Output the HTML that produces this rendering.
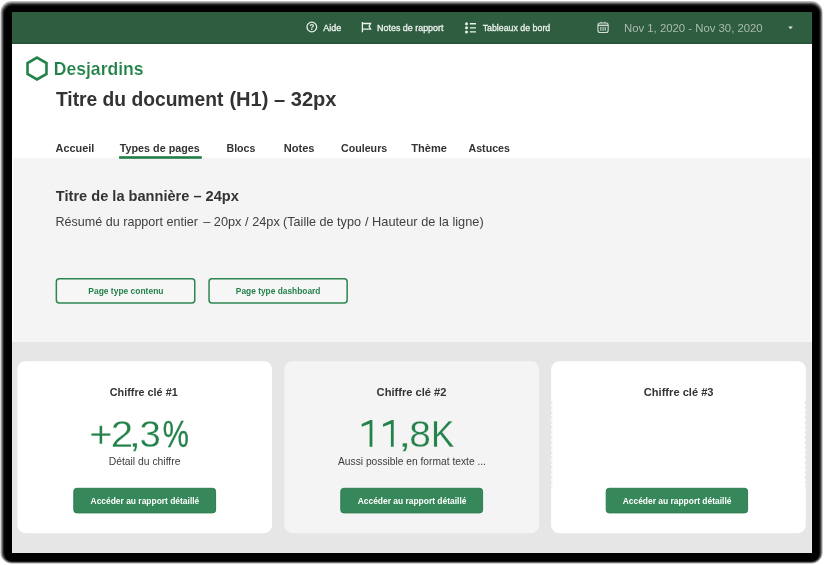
<!DOCTYPE html>
<html><head><meta charset="utf-8">
<style>
*{margin:0;padding:0;box-sizing:border-box}
html,body{width:824px;height:565px;overflow:hidden;background:#fff;font-family:"Liberation Sans",sans-serif}
svg{position:absolute;left:0;top:0}
.t{position:absolute;white-space:nowrap;transform-origin:0 50%}
</style></head><body>
<svg width="824" height="565" viewBox="0 0 824 565">
 <!-- black frame (flattened shadow) -->
 <rect x="0.6" y="1.2" width="821.9" height="562.3" rx="11" fill="#a6a6a6"/>
 <rect x="1.8" y="2.7" width="819.7" height="560.1" rx="10" fill="#595959"/>
 <rect x="3" y="4.1" width="817.5" height="557.9" rx="9" fill="#1f1f1f"/>
 <rect x="4.3" y="5.6" width="815.1" height="555.7" rx="8" fill="#000"/>
 <!-- app surface -->
 <rect x="12" y="12" width="800" height="541" fill="#fff"/>
 <rect x="12" y="12" width="800" height="31.9" fill="#2f5d40"/>
 <rect x="12" y="42.6" width="800" height="1.3" fill="#27533a"/>
 <rect x="13.1" y="158.1" width="797.8" height="184" fill="#f4f4f4"/>
 <rect x="12" y="342" width="800" height="211" fill="#e6e6e6"/>
 <!-- logo hexagon -->
 <path d="M37 57.55 L46.48 63.03 L46.48 73.98 L37 79.45 L27.52 73.98 L27.52 63.03 Z" fill="none" stroke="#23824a" stroke-width="2.6" stroke-linejoin="miter"/>
 <!-- help icon -->
 <circle cx="311.8" cy="27" r="4.85" fill="none" stroke="#eef3ef" stroke-width="1.25"/>
 <!-- flag icon -->
 <path d="M362.4 22 V32.2 M362.4 23.5 H370.6 L369.1 26.3 L370.6 29.1 H362.4" fill="none" stroke="#eef3ef" stroke-width="1.3"/>
 <!-- list icon -->
 <g fill="#eef3ef"><circle cx="466.5" cy="23.8" r="1.5"/><circle cx="466.5" cy="27.85" r="1.5"/><circle cx="466.5" cy="31.9" r="1.5"/></g>
 <path d="M469.9 23.8 H475.9 M469.9 27.85 H475.9 M469.9 31.9 H475.9" stroke="#eef3ef" stroke-width="1.4" fill="none"/>
 <!-- calendar icon -->
 <g stroke="#d6e0d9" fill="none" stroke-width="1.1">
  <rect x="597.95" y="22.95" width="10.2" height="9.6" rx="2"/>
  <path d="M598 25.3 H608.1" stroke-width="1.3"/>
  <path d="M601.2 21.8 V23 M604.9 21.8 V23 M600.85 26.8 V30.8 M603.05 26.8 V30.8 M605.25 26.8 V30.8" stroke-width="1"/>
 </g>
 <!-- dropdown arrow -->
 <path d="M788.3 26.6 H792.8 L790.55 29.3 Z" fill="#dfe7e2"/>
 <!-- nav underline -->
 <rect x="119.1" y="156.2" width="82.7" height="2.6" fill="#217f47"/>
 <!-- outline buttons -->
 <rect x="56.35" y="278.75" width="138.4" height="24.3" rx="3" fill="#f6f6f6" stroke="#2c8650" stroke-width="1.5"/>
 <rect x="209.05" y="278.75" width="138.1" height="24.3" rx="3" fill="#f6f6f6" stroke="#2c8650" stroke-width="1.5"/>
 <!-- cards -->
 <rect x="17.4" y="361.2" width="254.7" height="172" rx="8" fill="#fff"/>
 <rect x="284.3" y="361.2" width="254.7" height="172" rx="8" fill="#f4f4f4"/>
 <rect x="551.1" y="361.2" width="254.7" height="172" rx="8" fill="#fff"/>
 <path d="M551.8 401 V487 M805.2 401 V487" fill="none" stroke="#e4e4ee" stroke-width="1" stroke-dasharray="3 2"/>
 <!-- filled buttons -->
 <g fill="#36875a" stroke="#2e7d50" stroke-width="1">
  <rect x="73.8" y="488.3" width="141.8" height="24.6" rx="3"/>
  <rect x="340.8" y="488.3" width="141.8" height="24.6" rx="3"/>
  <rect x="606.2" y="488.3" width="141.4" height="24.6" rx="3"/>
 </g>
<g font-family="Liberation Sans" style="white-space:pre" opacity="0.999">
<path d="M372.4 420.1 V446.7 H369.6 V423.8 L361.7 426.7 V424.1 L370.4 420.1 Z M393.7 420.1 V446.7 H390.9 V423.8 L383 426.7 V424.1 L391.7 420.1 Z" fill="#23824a"/>
<text stroke="#eef3ef" stroke-width="0.3" transform="translate(323.30,31.00) scale(0.9722,1)" font-size="9.2" font-weight="normal" fill="#eef3ef">Aide</text>
<text transform="translate(309.52,30.40) scale(0.9500,1)" font-size="8.3" font-weight="bold" fill="#eef3ef">?</text>
<text stroke="#eef3ef" stroke-width="0.3" transform="translate(377.07,31.00) scale(0.9712,1)" font-size="9.2" font-weight="normal" fill="#eef3ef">Notes de rapport</text>
<text stroke="#eef3ef" stroke-width="0.3" transform="translate(482.66,31.00) scale(0.9577,1)" font-size="9.2" font-weight="normal" fill="#eef3ef">Tableaux de bord</text>
<text transform="translate(624.00,32.30) scale(0.9964,1)" font-size="11.4" font-weight="normal" fill="#abbdb1">Nov 1, 2020 - Nov 30, 2020</text>
<text stroke="#ffffff" stroke-width="0.15" transform="translate(53.80,75.20) scale(0.9596,1)" font-size="18.3" font-weight="bold" fill="#23824a">Desjardins</text>
<text transform="translate(55.96,105.90) scale(0.9620,1)" font-size="20.0" font-weight="bold" fill="#333333">Titre du document</text>
<text transform="translate(229.40,105.90) scale(1.0047,1)" font-size="20.0" font-weight="bold" fill="#333333">(H1) – 32px</text>
<text transform="translate(55.50,225.80) scale(0.9972,1)" font-size="12.6" font-weight="normal" fill="#404040">Résumé du rapport entier</text>
<text transform="translate(203.20,225.80) scale(1.0132,1)" font-size="12.6" font-weight="normal" fill="#404040">– 20px / 24px</text>
<text transform="translate(283.05,225.80) scale(1.0026,1)" font-size="12.6" font-weight="normal" fill="#404040">(Taille de typo</text>
<text transform="translate(365.00,225.80) scale(1.0151,1)" font-size="12.6" font-weight="normal" fill="#404040">/ Hauteur de la ligne)</text>
<text transform="translate(55.55,151.80) scale(0.9895,1)" font-size="11" font-weight="bold" fill="#333333">Accueil</text>
<text transform="translate(119.75,151.80) scale(0.9815,1)" font-size="11" font-weight="bold" fill="#333333">Types de pages</text>
<text transform="translate(226.48,151.80) scale(0.9635,1)" font-size="11" font-weight="bold" fill="#333333">Blocs</text>
<text transform="translate(283.74,151.80) scale(1.0085,1)" font-size="11" font-weight="bold" fill="#333333">Notes</text>
<text transform="translate(341.02,151.80) scale(0.9690,1)" font-size="11" font-weight="bold" fill="#333333">Couleurs</text>
<text transform="translate(411.35,151.80) scale(1.0072,1)" font-size="11" font-weight="bold" fill="#333333">Thème</text>
<text transform="translate(468.46,151.80) scale(0.9714,1)" font-size="11" font-weight="bold" fill="#333333">Astuces</text>
<text transform="translate(55.86,201.40) scale(0.9603,1)" font-size="15.2" font-weight="bold" fill="#333333">Titre de la bannière – 24px</text>
<text transform="translate(88.32,294.20) scale(0.9610,1)" font-size="8.8" font-weight="bold" fill="#23824a">Page type contenu</text>
<text transform="translate(235.82,294.20) scale(0.9534,1)" font-size="8.8" font-weight="bold" fill="#23824a">Page type dashboard</text>
<text transform="translate(109.82,396.30) scale(0.9566,1)" font-size="11.3" font-weight="bold" fill="#333333">Chiffre clé #1</text>
<text transform="translate(376.61,396.30) scale(0.9857,1)" font-size="11.3" font-weight="bold" fill="#333333">Chiffre clé #2</text>
<text transform="translate(643.81,396.30) scale(0.9829,1)" font-size="11.3" font-weight="bold" fill="#333333">Chiffre clé #3</text>
<text stroke="#ffffff" stroke-width="0.3" transform="translate(89.14,446.70) scale(1.0630,1)" font-size="37.3" font-weight="normal" fill="#23824a">+</text>
<text stroke="#ffffff" stroke-width="0.3" transform="translate(110.84,446.70) scale(1.0806,1)" font-size="37.3" font-weight="normal" fill="#23824a">2</text>
<text stroke="#ffffff" stroke-width="0.3" transform="translate(128.50,446.70) scale(1.2286,1)" font-size="37.3" font-weight="normal" fill="#23824a">,</text>
<text stroke="#ffffff" stroke-width="0.3" transform="translate(139.56,446.70) scale(1.0286,1)" font-size="37.3" font-weight="normal" fill="#23824a">3</text>
<text stroke="#23824a" stroke-width="0.3" transform="translate(162.82,446.70) scale(0.7869,1)" font-size="37.3" font-weight="normal" fill="#23824a">%</text>
<text stroke="#f4f4f4" stroke-width="0.3" transform="translate(397.70,446.70) scale(1.3429,1)" font-size="37.3" font-weight="normal" fill="#23824a">,</text>
<text stroke="#f4f4f4" stroke-width="0.3" transform="translate(409.27,446.70) scale(1.0435,1)" font-size="37.3" font-weight="normal" fill="#23824a">8</text>
<text stroke="#f4f4f4" stroke-width="0.3" transform="translate(430.98,446.70) scale(0.9412,1)" font-size="37.3" font-weight="normal" fill="#23824a">K</text>
<text transform="translate(108.65,465.00) scale(1.0064,1)" font-size="10.3" font-weight="normal" fill="#3d3d3d">Détail du chiffre</text>
<text transform="translate(338.00,465.00) scale(0.9946,1)" font-size="10.3" font-weight="normal" fill="#3d3d3d">Aussi possible en format texte ...</text>
<text transform="translate(90.57,504.30) scale(0.9368,1)" font-size="9.0" font-weight="bold" fill="#ffffff">Accéder au rapport détaillé</text>
<text transform="translate(357.67,504.30) scale(0.9377,1)" font-size="9.0" font-weight="bold" fill="#ffffff">Accéder au rapport détaillé</text>
<text transform="translate(622.67,504.30) scale(0.9377,1)" font-size="9.0" font-weight="bold" fill="#ffffff">Accéder au rapport détaillé</text>

</g>
</svg>
</body></html>
